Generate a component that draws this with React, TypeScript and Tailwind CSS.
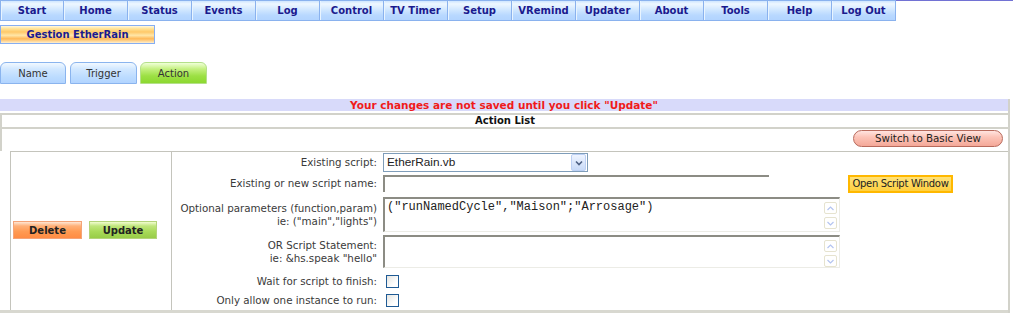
import React from "react";

const navItems = ["Start","Home","Status","Events","Log","Control","TV Timer","Setup","VRemind","Updater","About","Tools","Help","Log Out"];

function ScrollBtn({ up }: { up?: boolean }) {
  return (
    <div className="w-[13px] h-[12px] rounded-[2px] border border-[#e6e3cf] bg-white flex items-center justify-center">
      <svg width="7" height="5" viewBox="0 0 7 5">
        <path d={up ? "M0.5 4 L3.5 1 L6.5 4" : "M0.5 1 L3.5 4 L6.5 1"} fill="none" stroke="#b4c4f0" strokeWidth="1.2" />
      </svg>
    </div>
  );
}

function FakeTextarea({ h, text }: { h: string; text?: string }) {
  return (
    <div className={`w-[457px] ${h} flex border-t-2 border-l-2 border-[#8c8c84] border-r border-b border-r-[#ecece6] border-b-[#ecece6] bg-white`}>
      <div className="flex-1 pl-[2px] pt-[2px] font-['Liberation_Mono',monospace] text-[12px] leading-[13px] text-[#222]">{text}</div>
      <div className="w-[15px] flex flex-col gap-[3px] pt-[3px]">
        <ScrollBtn up />
        <ScrollBtn />
      </div>
    </div>
  );
}

function Checkbox() {
  return <div className="w-[13px] h-[13px] border border-[#1f5a94] bg-[linear-gradient(135deg,#e4e4e0,#ffffff_70%)]" />;
}

export default function App() {
  return (
    <div className="w-[1013px] h-[321px] overflow-hidden bg-white font-['DejaVu_Sans',sans-serif] text-[#333]">
      {/* Top nav */}
      <div className="flex h-[21px]">
        {navItems.map((n, i) => (
          <div
            key={n}
            className={`w-[64px] h-[21px] flex items-center justify-center border-t border-b border-r border-[#8ab2ee] ${i === 0 ? "border-l" : ""} shadow-[inset_1px_0_0_#e8f4ff] bg-[linear-gradient(to_bottom,#cfe6ff_0%,#eef7ff_15%,#d2e8ff_45%,#b8d8ff_75%,#b2d4ff_100%)] text-[10px] font-bold text-[#1a1a8e]`}
          >
            {n}
          </div>
        ))}
        <div className="flex-1 border-t border-[#7272d4]" />
      </div>

      {/* Gestion EtherRain */}
      <div className="mt-[4px] w-[155px] h-[19px] border border-[#86aef2] flex items-center justify-center bg-[linear-gradient(to_bottom,#fff8e0_0%,#ffe49a_15%,#ffc868_35%,#ffe6a8_55%,#ffb858_75%,#ffd89a_90%,#fff0d0_100%)] text-[10px] font-bold text-[#1a1a8e]">
        Gestion EtherRain
      </div>

      {/* Tabs */}
      <div className="mt-[18px] flex h-[22px]">
        <div className="w-[66px] h-[22px] rounded-t-[6px] border border-[#8ab4ee] bg-[linear-gradient(to_bottom,#f2f9ff_0%,#d2e8ff_30%,#bcdcff_70%,#b2d4ff_100%)] flex items-center justify-center text-[10px] text-[#333]">Name</div>
        <div className="ml-[4px] w-[67px] h-[22px] rounded-t-[6px] border border-[#8ab4ee] bg-[linear-gradient(to_bottom,#f2f9ff_0%,#d2e8ff_30%,#bcdcff_70%,#b2d4ff_100%)] flex items-center justify-center text-[10px] text-[#333]">Trigger</div>
        <div className="ml-[3px] w-[67px] h-[22px] rounded-t-[6px] border border-[#b4e08a] bg-[linear-gradient(to_bottom,#f0ffd8_0%,#c4f080_30%,#9ce044_65%,#8cd830_100%)] flex items-center justify-center text-[10px] text-[#333]">Action</div>
      </div>

      {/* Main table */}
      <div className="mt-[15px] w-[1010px] border-r-2 border-[#d2d2ca]">
        <div className="h-[12px] bg-[#d8dafa] flex items-center justify-center text-[10.5px] leading-[12px] font-bold text-[#f01a1a]">
          Your changes are not saved until you click "Update"
        </div>
        <div className="mt-[2px] h-[16px] border-t-2 border-b-2 border-l-2 border-[#d2d2ca] flex items-center justify-center text-[10px] leading-[12px] font-bold text-[#111]">
          Action List
        </div>
        <div className="h-[22px] border-l-2 border-[#d2d2ca] flex justify-end items-start pt-[1px] pr-[5px]">
          <div className="w-[150px] h-[17px] rounded-full border border-[#b86a5c] bg-[linear-gradient(to_bottom,#ffe4e0_0%,#fcc4b8_40%,#f4a898_100%)] flex items-center justify-center text-[10.3px] text-[#222]">
            Switch to Basic View
          </div>
        </div>
        <div className="pl-[10px] border-b-[3px] border-[#d8d8d0]">
          <div className="flex h-[159px]">
            {/* Left cell */}
            <div className="w-[161px] border-l border-t border-[#c4c4bc] flex items-center pl-[2px] pb-[2px]">
              <div className="w-[69px] h-[18px] border border-[#f4a478] bg-[linear-gradient(to_bottom,#ffe6d4_0%,#ffb078_25%,#ff9a52_60%,#ff8c44_100%)] flex items-center justify-center text-[10px] font-bold text-[#222]">
                Delete
              </div>
              <div className="ml-[7px] w-[68px] h-[18px] border border-[#b4d47a] bg-[linear-gradient(to_bottom,#f2fcd0_0%,#c0e67c_25%,#a8da58_60%,#98cc48_100%)] flex items-center justify-center text-[10px] font-bold text-[#222]">
                Update
              </div>
            </div>
            {/* Right cell */}
            <div className="flex-1 border-l border-t border-[#c4c4bc] text-[10.3px] leading-[13px] text-[#3a3a3a]">
              <div className="mt-[1px] h-[19px] flex items-center">
                <div className="w-[205px] text-right">Existing script:</div>
                <div className="ml-[6px] w-[205px] h-[19px] border border-[#7f9db9] bg-white flex items-center">
                  <div className="flex-1 pl-[3px] font-['Liberation_Sans',sans-serif] text-[11.8px] text-[#222]">EtherRain.vb</div>
                  <div className="mr-[1px] w-[15px] h-[17px] rounded-[2px] border border-[#bcd0f4] bg-[linear-gradient(to_bottom,#eef4ff,#c8daf8)] flex items-center justify-center">
                    <svg width="8" height="6" viewBox="0 0 8 6">
                      <path d="M1 1.5 L4 4.5 L7 1.5" fill="none" stroke="#4d6185" strokeWidth="1.6" />
                    </svg>
                  </div>
                </div>
              </div>
              <div className="mt-[3px] h-[17px] flex items-center">
                <div className="w-[205px] text-right">Existing or new script name:</div>
                <div className="ml-[6px] w-[386px] h-[17px] border-t-2 border-l-2 border-[#8c8c84] bg-white" />
                <div className="ml-[79px] w-[105px] h-[18px] border-2 border-[#ffb800] bg-[linear-gradient(to_bottom,#ffe278,#ffd040)] flex items-center justify-center text-[10px] tracking-[-0.3px] text-[#222]">
                  Open Script Window
                </div>
              </div>
              <div className="mt-[5px] h-[35px] flex items-center">
                <div className="w-[205px] text-right">
                  Optional parameters (function,param)
                  <br />
                  ie: ("main","lights")
                </div>
                <div className="ml-[6px]">
                  <FakeTextarea h="h-[35px]" text={'("runNamedCycle","Maison";"Arrosage")'} />
                </div>
              </div>
              <div className="mt-[3px] h-[33px] flex items-center">
                <div className="w-[205px] text-right">
                  OR Script Statement:
                  <br />
                  ie: &amp;hs.speak "hello"
                </div>
                <div className="ml-[6px]">
                  <FakeTextarea h="h-[33px]" />
                </div>
              </div>
              <div className="mt-[4px] h-[18px] flex items-center">
                <div className="w-[205px] text-right">Wait for script to finish:</div>
                <div className="ml-[9px]"><Checkbox /></div>
              </div>
              <div className="mt-[1px] h-[18px] flex items-center">
                <div className="w-[205px] text-right">Only allow one instance to run:</div>
                <div className="ml-[9px]"><Checkbox /></div>
              </div>
            </div>
          </div>
        </div>
      </div>
    </div>
  );
}
